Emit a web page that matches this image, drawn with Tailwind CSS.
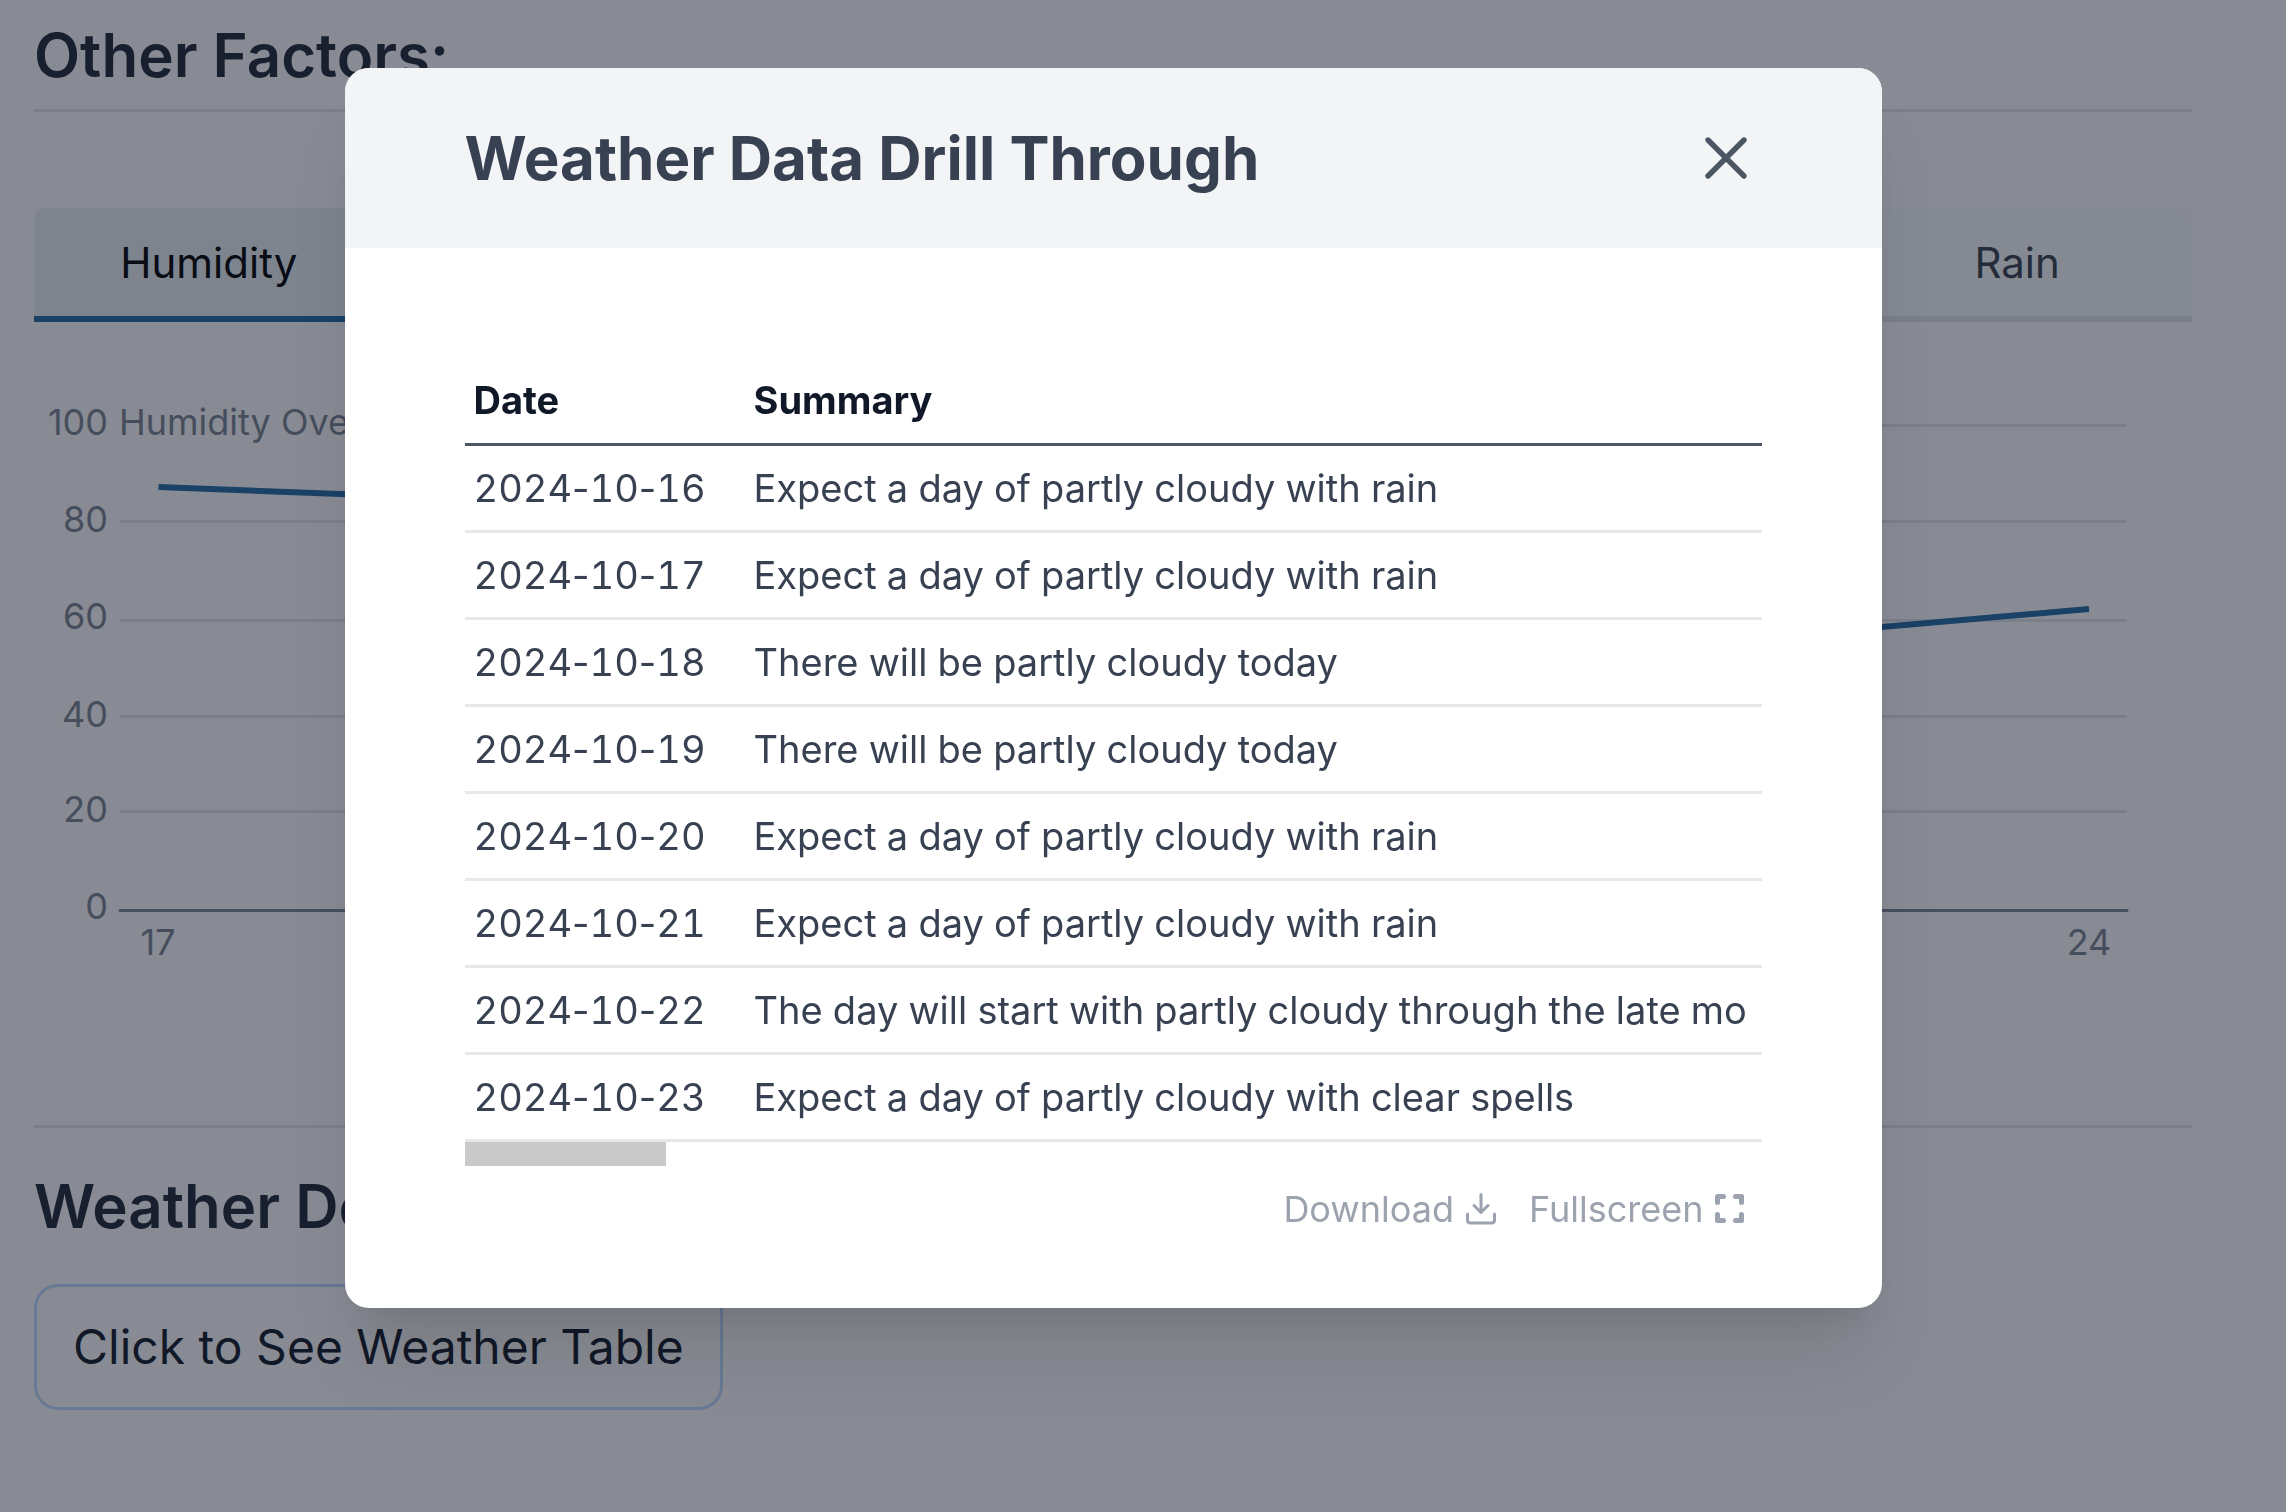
<!DOCTYPE html>
<html lang="en">
<head>
<meta charset="utf-8">
<title>Weather Data Drill Through</title>
<script src="https://cdn.jsdelivr.net/npm/@tailwindcss/browser@4"></script>
</head>
<body class="min-h-screen overflow-hidden bg-white font-['Inter',sans-serif] text-[#1f2937]">
<main class="pl-[34px] pr-[94px] pt-[19px]">
  <h2 class="text-[60px] leading-[72px] font-semibold">Other Factors:</h2>
  <hr class="mt-[18px] border-t-3 border-[#e5e7eb]">

  <div role="tablist" class="mt-[96px] grid grid-cols-6 gap-3">
    <button role="tab" aria-selected="true" class="h-[114px] rounded-t-xl border-b-6 border-[#236aa4] bg-[#e9f1f4] pt-[2px] text-[42px] leading-[54px] text-black">Humidity</button>
    <button role="tab" aria-selected="false" class="col-start-6 h-[114px] rounded-t-xl border-b-6 border-[#e5e7eb] bg-[#f9fafb] pt-[2px] text-[42px] leading-[54px] text-[#374151]">Rain</button>
  </div>

  <!-- Humidity line chart -->
  <svg class="mt-[58px] block w-full" viewBox="0 0 2158 620" role="img" aria-label="Humidity chart">
    <g stroke="#e5e7eb" stroke-width="3">
      <path d="M500 45.500H2093M86 141.500H2093M86 240.500H2093M86 336.500H2093M86 431.500H2093"/>
    </g>
    <path d="M86 530.500H2093" stroke="#7d8797" stroke-width="3" stroke-linecap="round"/>
    <path d="M124.500 107L400 117.500L1779 253L2055 229" fill="none" stroke="#236aa4" stroke-width="6"/>
    <g fill="#7b8492" font-size="36" text-anchor="end">
      <text x="74" y="55">100</text>
      <text x="74" y="152">80</text>
      <text x="74" y="249">60</text>
      <text x="74" y="347">40</text>
      <text x="74" y="442">20</text>
      <text x="74" y="539">0</text>
    </g>
    <g fill="#7b8492" font-size="36" text-anchor="middle">
      <text x="124" y="575">17</text>
      <text x="2055" y="575">24</text>
    </g>
    <text x="85" y="55" fill="#7b8492" font-size="36">Humidity Over</text>
  </svg>

  <hr class="mt-[125px] border-t-3 border-[#e5e7eb]">
  <h2 class="mt-[42px] text-[60px] leading-[72px] font-semibold">Weather Details</h2>
  <button class="mt-[42px] h-[126px] rounded-3xl border-3 border-[#bfdbfe] px-[36px] text-[48px] leading-[60px] text-[#111827]">Click to See Weather Table</button>
</main>

<div class="fixed inset-0 flex items-start justify-center bg-[#111827]/50 pl-[34px] pr-[94px] pt-[68px]">
  <section role="dialog" aria-modal="true" aria-labelledby="dialog-title" class="w-full max-w-[1537px] overflow-hidden rounded-3xl bg-white shadow-[0_60px_75px_-15px_rgba(0,0,0,0.1),0_24px_30px_-18px_rgba(0,0,0,0.1)]">
    <header class="flex h-[180px] items-center justify-between bg-[#f3f4f6] px-[120px]">
      <h1 id="dialog-title" class="text-[60px] leading-[72px] font-bold text-[#374151]">Weather Data Drill Through</h1>
      <button aria-label="Close" class="text-[#4b5563]">
        <svg class="size-[72px]" viewBox="0 0 24 24" fill="none" stroke="currentColor" stroke-width="1.8" stroke-linecap="round"><path d="M6 6L18 18M18 6L6 18"/></svg>
      </button>
    </header>
    <div class="px-[120px] pt-[110px] pb-[75px]">
      <div class="overflow-hidden">
        <table class="w-full text-left text-[38px] leading-[48px] whitespace-nowrap text-[#374151] tabular-nums">
          <thead class="text-[#111827]">
            <tr class="h-[86px] border-b-3 border-[#4b5563]"><th class="w-[283px] pl-[9px] font-bold">Date</th><th class="px-[6px] font-bold">Summary</th></tr>
          </thead>
          <tbody>
            <tr class="h-[87px] border-b-3 border-[#e5e7eb]"><td class="w-[283px] min-w-[283px] pl-[9px]">2024<span class="proportional-nums">-</span>10<span class="proportional-nums">-</span>16</td><td class="px-[6px]">Expect a day of partly cloudy with rain</td></tr>
            <tr class="h-[87px] border-b-3 border-[#e5e7eb]"><td class="pl-[9px]">2024<span class="proportional-nums">-</span>10<span class="proportional-nums">-</span>17</td><td class="px-[6px]">Expect a day of partly cloudy with rain</td></tr>
            <tr class="h-[87px] border-b-3 border-[#e5e7eb]"><td class="pl-[9px]">2024<span class="proportional-nums">-</span>10<span class="proportional-nums">-</span>18</td><td class="px-[6px]">There will be partly cloudy today</td></tr>
            <tr class="h-[87px] border-b-3 border-[#e5e7eb]"><td class="pl-[9px]">2024<span class="proportional-nums">-</span>10<span class="proportional-nums">-</span>19</td><td class="px-[6px]">There will be partly cloudy today</td></tr>
            <tr class="h-[87px] border-b-3 border-[#e5e7eb]"><td class="pl-[9px]">2024<span class="proportional-nums">-</span>10<span class="proportional-nums">-</span>20</td><td class="px-[6px]">Expect a day of partly cloudy with rain</td></tr>
            <tr class="h-[87px] border-b-3 border-[#e5e7eb]"><td class="pl-[9px]">2024<span class="proportional-nums">-</span>10<span class="proportional-nums">-</span>21</td><td class="px-[6px]">Expect a day of partly cloudy with rain</td></tr>
            <tr class="h-[87px] border-b-3 border-[#e5e7eb]"><td class="pl-[9px]">2024<span class="proportional-nums">-</span>10<span class="proportional-nums">-</span>22</td><td class="pl-[6px]">The day will start with partly cloudy through the late mo</td></tr>
            <tr class="h-[87px] border-b-3 border-[#e5e7eb]"><td class="pl-[9px]">2024<span class="proportional-nums">-</span>10<span class="proportional-nums">-</span>23</td><td class="px-[6px]">Expect a day of partly cloudy with clear spells</td></tr>
          </tbody>
        </table>
      </div>
      <!-- Horizontal scroll thumb -->
      <div class="h-6 w-[201px] bg-[#c9c9c9]"></div>
      <div class="mt-[19px] flex items-center justify-end gap-[30px] pr-[16px] text-[36px] leading-[48px] text-[#9ca3af]">
        <button class="flex items-center gap-[9px]">Download
          <svg class="size-9" viewBox="0 0 36 36" fill="none" stroke="currentColor" stroke-width="3" stroke-linecap="round" stroke-linejoin="round"><path d="M18 3.500V21M11 14.500L18 21.500L25 14.500M4.500 23V29Q4.500 32 7.500 32H28.500Q31.500 32 31.500 29V23"/></svg>
        </button>
        <button class="flex items-center gap-[9px]">Fullscreen
          <svg class="size-[33px]" viewBox="0 0 33 33" fill="none" stroke="currentColor" stroke-width="5" stroke-linecap="round" stroke-linejoin="round"><path d="M4.500 10.500V4.500H10.500M22.500 4.500H28.500V10.500M4.500 22.500V28.500H10.500M28.500 22.500V28.500H22.500"/></svg>
        </button>
      </div>
    </div>
  </section>
</div>
</body>
</html>
